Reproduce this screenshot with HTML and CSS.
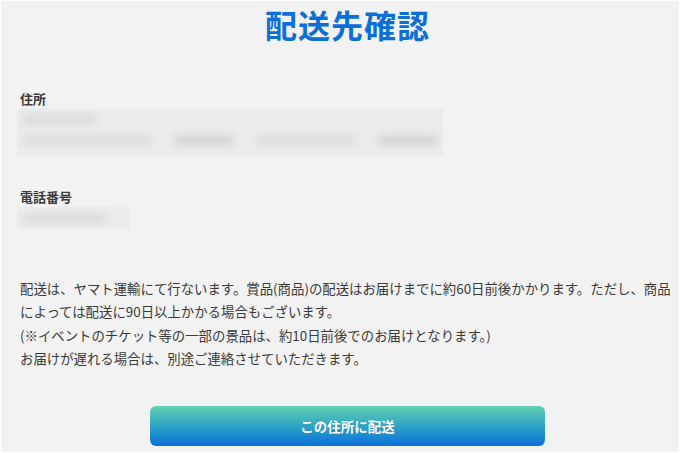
FILE: index.html
```html
<!DOCTYPE html>
<html lang="ja">
<head>
<meta charset="utf-8">
<link rel="stylesheet" href="styles.css">
</head>
<body>
<div class="page">
  <h1 class="title">配送先確認</h1>
  <section class="field">
    <div class="label">住所</div>
    <div class="blur-box address">
      <div class="blur-line"><span class="bar w75"></span></div>
      <div class="blur-line"><span class="bar w130"></span><span class="bar w60 dark"></span><span class="bar w100"></span><span class="bar w60 dark"></span></div>
    </div>
  </section>
  <section class="field phone-field">
    <div class="label">電話番号</div>
    <div class="blur-box phone">
      <div class="blur-line"><span class="bar w85"></span></div>
    </div>
  </section>
  <p class="notice">配送は、ヤマト運輸にて行ないます。賞品(商品)の配送はお届けまでに約60日前後かかります。ただし、商品によっては配送に90日以上かかる場合もございます。<br>(※イベントのチケット等の一部の景品は、約10日前後でのお届けとなります。)<br>お届けが遅れる場合は、別途ご連絡させていただきます。</p>
  <div class="actions">
    <button class="submit" type="button">この住所に配送</button>
  </div>
</div>
</body>
</html>
```
FILE: styles.css
```css
* { box-sizing: border-box; }
html, body { margin: 0; padding: 0; background: #ffffff; }
body {
  font-family: "Noto Sans CJK JP", "Noto Sans", sans-serif;
  color: #333333;
}
.page {
  margin: 1px 1px 0 1px;
  height: 451px;
  background: #f2f2f2;
  padding: 0 4px 0 19px;
  overflow: hidden;
}
.title {
  margin: 0;
  padding: 0;
  text-align: center;
  font-size: 32px;
  line-height: 46px;
  font-weight: 700;
  color: #0b6fd7;
  letter-spacing: 1px;
}
.field { margin-top: 43px; }
.phone-field { margin-top: 31px; }
.label {
  font-size: 13px;
  font-weight: 700;
  line-height: 18px;
  color: #3c3c3c;
}
.blur-box {
  margin-left: -3px;
  margin-top: 1px;
  background: #ececec;
  padding: 6px 5px;
  display: flex;
  flex-direction: column;
  gap: 12px;
}
.address { width: 426px; height: 48px; }
.phone { width: 113px; height: 22px; padding-top: 7px; }
.blur-line { display: flex; gap: 22px; }
.bar {
  display: block;
  height: 9px;
  background: #d9d9d9;
  border-radius: 5px;
  filter: blur(4px);
}
.bar.dark { background: #d0d0d0; }
.w60 { width: 60px; }
.w75 { width: 75px; }
.w85 { width: 85px; }
.w100 { width: 100px; }
.w130 { width: 130px; }
.notice {
  margin: 48px 0 0 0;
  font-size: 13.4px;
  line-height: 23.4px;
  color: #3a3a3a;
}
.actions {
  display: flex;
  justify-content: center;
  margin-top: 35px;
}
.submit {
  width: 395px;
  height: 40px;
  border: none;
  border-radius: 6px;
  background: linear-gradient(to bottom, #62d1ae 0%, #2a9fc8 55%, #0a6fda 100%);
  color: #ffffff;
  font-family: "Noto Sans CJK JP", "Noto Sans", sans-serif;
  font-size: 13.5px;
  font-weight: 700;
  text-shadow: 0 0 1px rgba(0,0,0,0.2);
  cursor: pointer;
}
```
